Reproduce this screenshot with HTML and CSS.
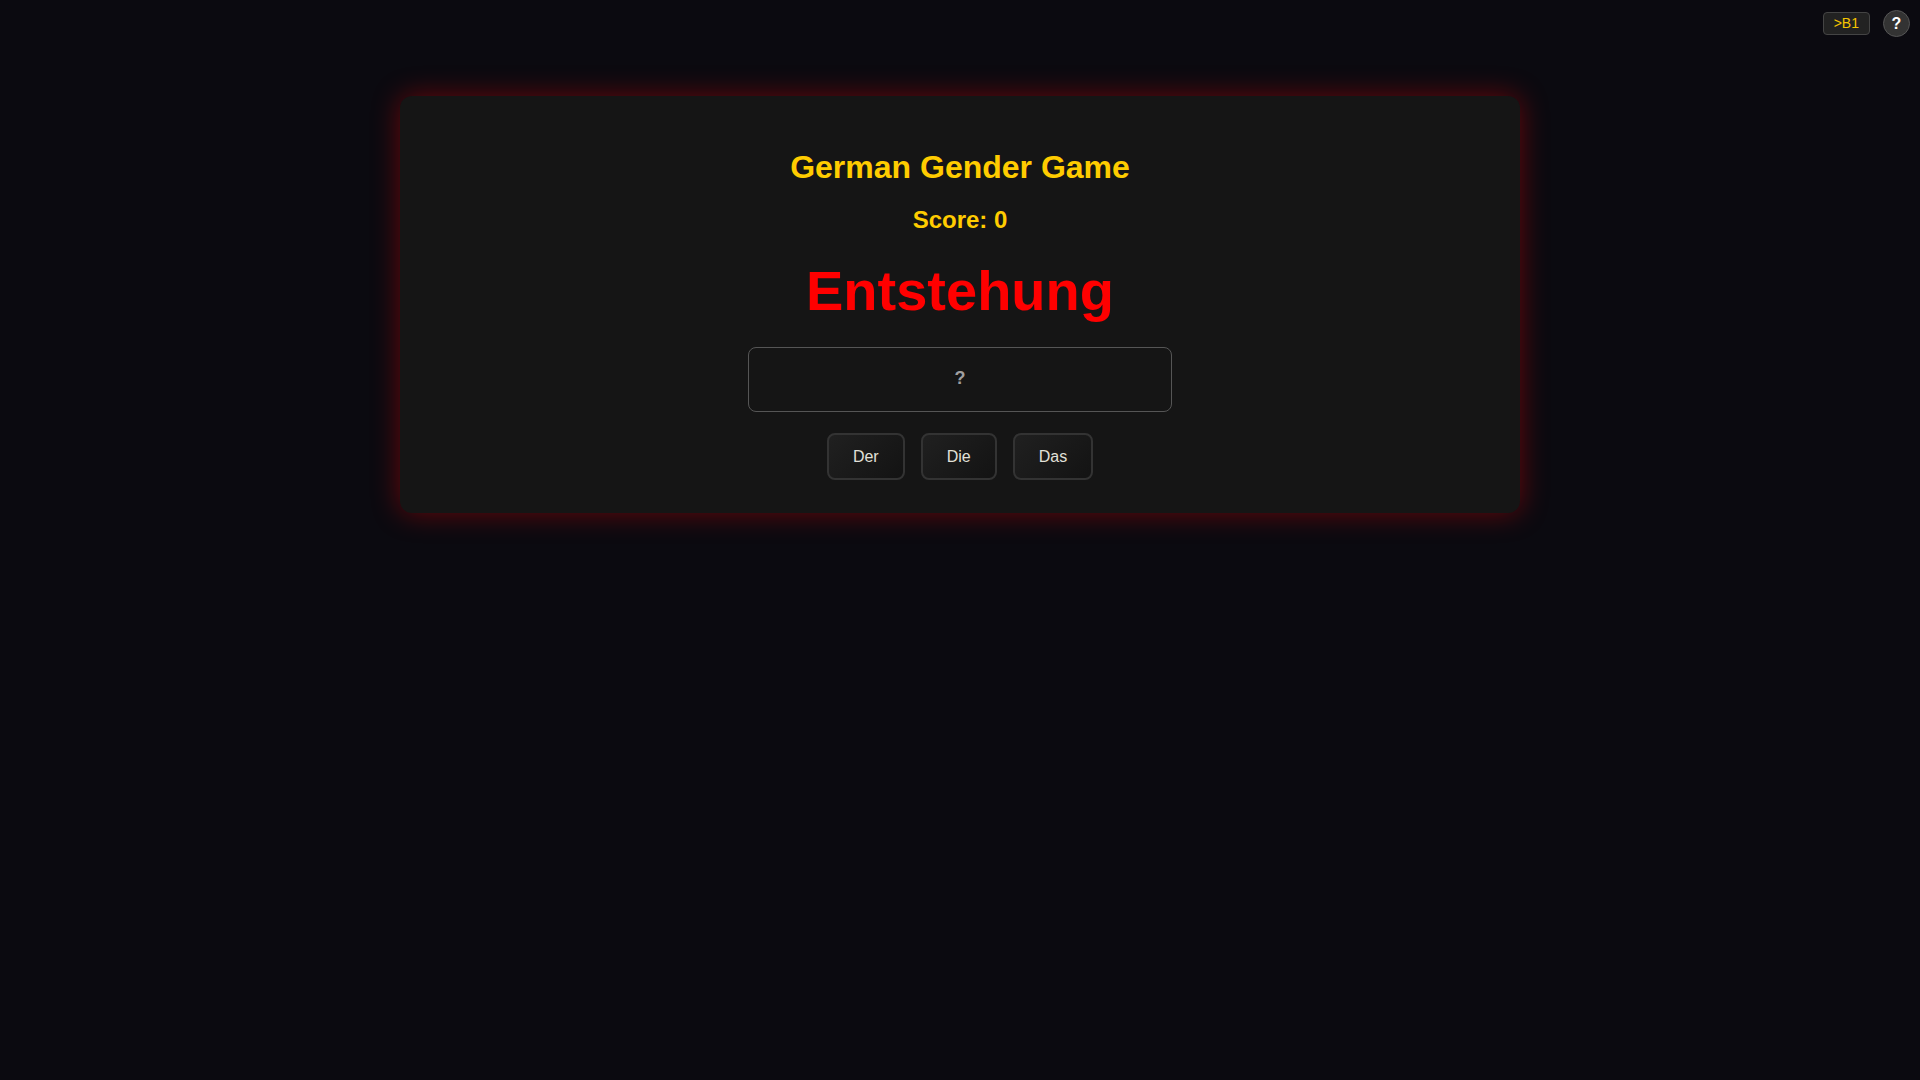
FILE: index.html
```html
<!DOCTYPE html>
<html lang="de">
<head>
<meta charset="utf-8">
<title>German Gender Game</title>
<link rel="stylesheet" href="styles.css">
</head>
<body>
<div class="topbar">
  <span class="level">&gt;B1</span>
  <span class="help">?</span>
</div>
<main class="page">
  <section class="card">
    <h1 class="title">German Gender Game</h1>
    <h2 class="score">Score: 0</h2>
    <div class="word">Entstehung</div>
    <div class="answer">?</div>
    <div class="choices">
      <button class="choice">Der</button>
      <button class="choice">Die</button>
      <button class="choice">Das</button>
    </div>
  </section>
</main>
</body>
</html>
```
FILE: styles.css
```css
html, body {
  margin: 0;
  padding: 0;
  background: #0b0a10;
  font-family: "Liberation Sans", Arial, sans-serif;
  min-height: 100vh;
}

.topbar {
  position: absolute;
  top: 10px;
  right: 10px;
  display: flex;
  align-items: center;
  gap: 13px;
}

.level {
  display: block;
  box-sizing: border-box;
  height: 23px;
  padding: 0 10px;
  line-height: 21px;
  font-size: 14px;
  color: #f5c400;
  background: #222222;
  border: 1px solid #444444;
  border-radius: 4px;
}

.help {
  display: flex;
  align-items: center;
  justify-content: center;
  box-sizing: border-box;
  width: 27px;
  height: 27px;
  border-radius: 50%;
  background: #333333;
  border: 1px solid #555555;
  color: #ffffff;
  font-weight: bold;
  font-size: 16px;
}

.page {
  padding-top: 96px;
  display: flex;
  justify-content: center;
}

.card {
  width: 1120px;
  box-sizing: border-box;
  padding: 30px 40px 33px;
  background: #151515;
  border-radius: 12px;
  box-shadow: 0 0 28px rgba(255, 0, 0, 0.38);
  display: flex;
  flex-direction: column;
  align-items: center;
}

.title {
  margin: 23px 0 0;
  font-size: 32px;
  line-height: 37px;
  font-weight: bold;
  color: #ffcc00;
}

.score {
  margin: 20px 0 0;
  font-size: 24px;
  line-height: 28px;
  font-weight: bold;
  color: #ffcc00;
}

.word {
  margin-top: 26px;
  font-size: 56px;
  line-height: 62px;
  font-weight: bold;
  color: #ff0000;
}

.answer {
  margin-top: 25px;
  box-sizing: border-box;
  width: 424px;
  height: 65px;
  border: 1px solid #555555;
  border-radius: 8px;
  display: flex;
  align-items: center;
  justify-content: center;
  padding-bottom: 3px;
  font-size: 18px;
  font-weight: bold;
  color: #a0a0a0;
}

.choices {
  margin-top: 21px;
  display: flex;
  gap: 16px;
}

.choice {
  box-sizing: border-box;
  height: 47px;
  padding: 0 24px;
  font-family: "Liberation Sans", Arial, sans-serif;
  font-size: 16px;
  color: #e2e0d8;
  background: linear-gradient(135deg, #202020 0%, #131313 100%);
  border: 2px solid #333333;
  border-radius: 8px;
}
```
